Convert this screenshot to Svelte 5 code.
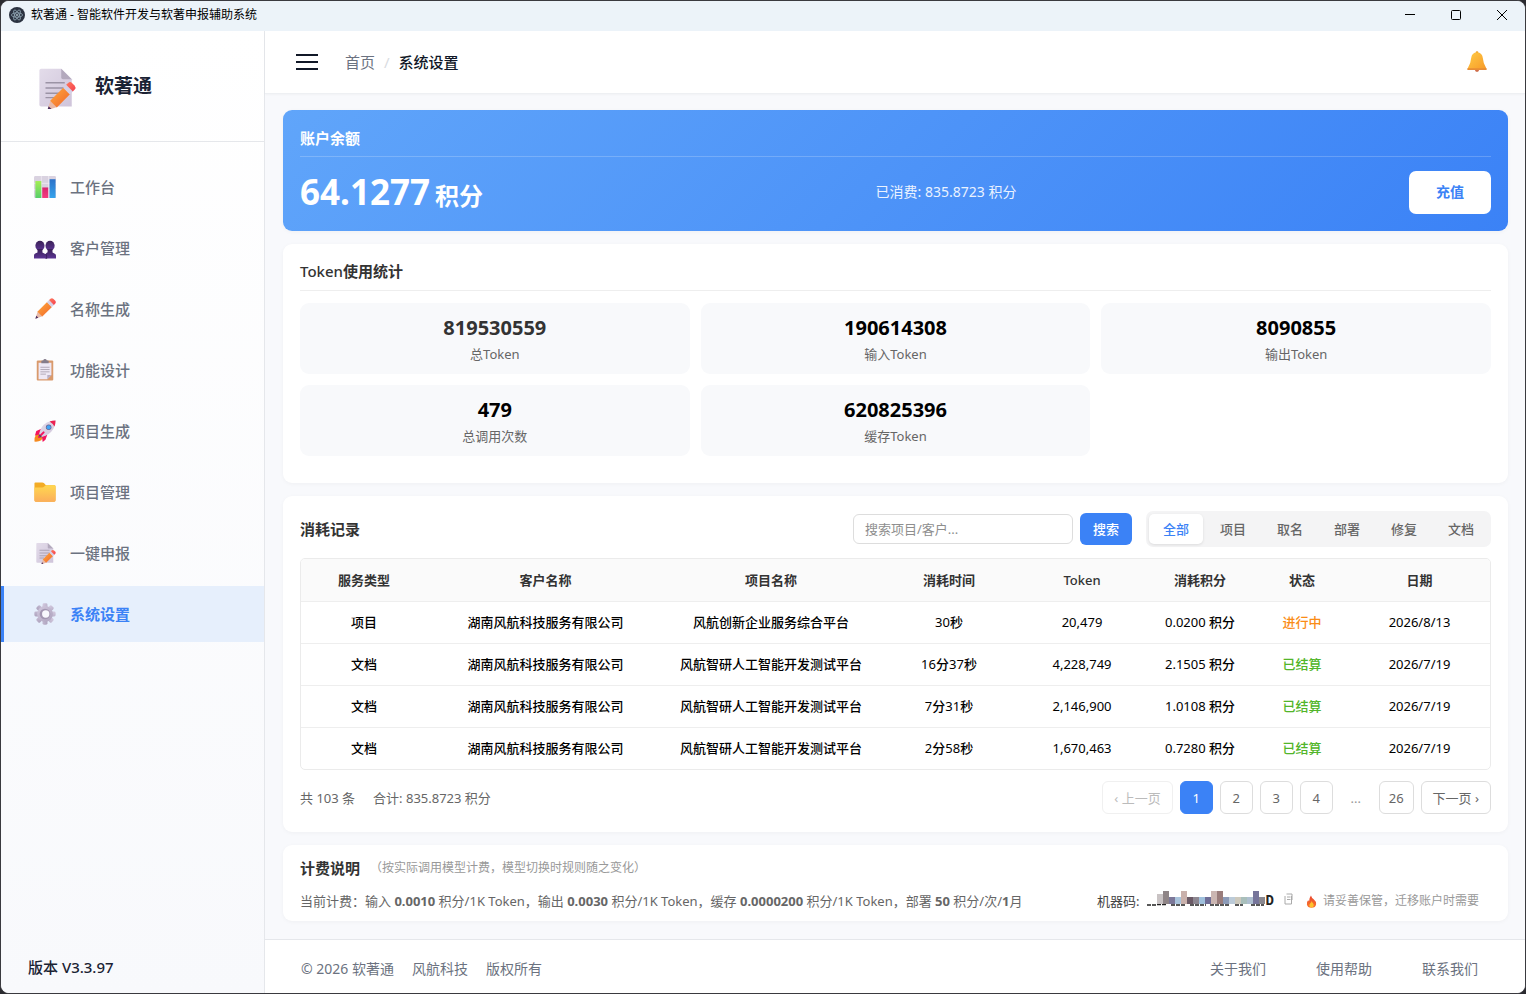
<script>
  const menu = [
    { label: '工作台', icon: 'chart' },
    { label: '客户管理', icon: 'people' },
    { label: '名称生成', icon: 'pencil' },
    { label: '功能设计', icon: 'clipboard' },
    { label: '项目生成', icon: 'rocket' },
    { label: '项目管理', icon: 'folder' },
    { label: '一键申报', icon: 'memo' },
    { label: '系统设置', icon: 'gear' }
  ];
  let current = $state('系统设置');

  const stats = [
    { value: '819530559', label: '总Token', soft: true },
    { value: '190614308', label: '输入Token' },
    { value: '8090855', label: '输出Token' },
    { value: '479', label: '总调用次数' },
    { value: '620825396', label: '缓存Token' }
  ];

  const filters = ['全部', '项目', '取名', '部署', '修复', '文档'];
  let filter = $state('全部');
  let query = $state('');

  const columns = [
    { title: '服务类型', width: 126 },
    { title: '客户名称', width: 237 },
    { title: '项目名称', width: 214 },
    { title: '消耗时间', width: 142 },
    { title: 'Token', width: 124 },
    { title: '消耗积分', width: 112 },
    { title: '状态', width: 92 },
    { title: '日期', width: 143 }
  ];
  const company = '湖南风航科技服务有限公司';
  const rows = [
    { type: '项目', project: '风航创新企业服务综合平台', time: '30秒', token: '20,479', cost: '0.0200', status: '进行中', date: '2026/8/13' },
    { type: '文档', project: '风航智研人工智能开发测试平台', time: '16分37秒', token: '4,228,749', cost: '2.1505', status: '已结算', date: '2026/7/19' },
    { type: '文档', project: '风航智研人工智能开发测试平台', time: '7分31秒', token: '2,146,900', cost: '1.0108', status: '已结算', date: '2026/7/19' },
    { type: '文档', project: '风航智研人工智能开发测试平台', time: '2分58秒', token: '1,670,463', cost: '0.7280', status: '已结算', date: '2026/7/19' }
  ];
  let page = $state(1);

  // digits are set lighter than the units between them
  const timeParts = (t) => t.split(/(\d+)/).filter(Boolean);

  const mosaic = [
    [10, 3, '#c9c3c4'], [16, 0, '#8f8587'], [22, 6, '#7c7899'], [28, 6, '#a9c4dc'], [34, 0, '#c9b1ac'],
    [40, 6, '#6b5a66'], [46, 6, '#8d8791'], [52, 6, '#9fc0dc'], [58, 6, '#6f6d96'], [64, 0, '#cbb6b2'],
    [70, 0, '#9a7d7c'], [76, 6, '#8c9bb8'], [82, 6, '#bccbd8'], [88, 6, '#cdc9bd'], [94, 6, '#a9bfbb'],
    [100, 6, '#aebfd0'], [106, 0, '#76759a'], [112, 6, '#8a8890']
  ];
</script>

{#snippet pencilArt()}
  <path d="M1.500 22.500 4 14.800 9.200 20Z" fill="#e8b9a8" />
  <path d="M1.500 22.500 2.500 19.300 4.700 21.500Z" fill="#4a2c5e" />
  <path d="M3.700 15 14.300 4.400 19.600 9.700 9 20.300Z" fill="url(#g-pencil)" />
  <path d="M14 4.700 16.700 2 22 7.300 19.300 10Z" fill="#d5d0e6" />
  <path d="M16.400 2.300 18 .8Q19.600-.5 21.200 1L23 2.800Q24.500 4.400 23.200 6L21.700 7.600Z" fill="url(#g-eraser)" />
{/snippet}

{#snippet paperArt()}
  <path d="M3.500 1H15l6 6v15.500H3.500Q2.500 22.500 2.500 21.500V2Q2.500 1 3.500 1Z" fill="url(#g-paper)" />
  <path d="M15 1l6 6h-5Q15 7 15 6Z" fill="#b3a9bd" />
  <path d="M6 9h11M6 12h11M6 15h9M6 17.500h5" stroke="#9b93a5" stroke-width=".8" fill="none" />
{/snippet}

{#snippet icon(name)}
  <svg class="icon" viewBox="0 0 24 24" aria-hidden="true">
    {#if name === 'chart'}
      <rect x="0" y="0" width="24" height="24" rx="1.500" fill="#d9d2e0" />
      <path d="M0 8h24M0 15h24M8 0v24M16 0v24" stroke="#f1edf4" stroke-width=".8" />
      <rect x="1.500" y="5.500" width="6.500" height="18.500" fill="url(#g-green)" />
      <rect x="9" y="12.500" width="6.500" height="11.500" fill="url(#g-pink)" />
      <rect x="17" y="3.500" width="6.500" height="20.500" fill="url(#g-blue)" />
    {:else if name === 'people'}
      <g fill="url(#g-purple)" transform="translate(0 2)">
        <ellipse cx="17.500" cy="7.500" rx="5" ry="5.500" />
        <path d="M14.800 11h5.400v4l3 1.500q.8 .6.800 2v3H12v-3q0-2 1.500-3l1.300-.8Z" />
        <ellipse cx="6.500" cy="7.500" rx="5" ry="5.500" />
        <path d="M3.800 11h5.400v4l3 1.500q1.300 .8 1.300 2.500v2.500H0v-3q0-1.700 1.300-2.400l2.500-1.100Z" />
      </g>
      <path d="M12.500 18.500q1.300 1 1.300 3V24" stroke="#2c1646" stroke-width=".7" fill="none" />
    {:else if name === 'pencil'}
      {@render pencilArt()}
    {:else if name === 'clipboard'}
      <rect x="3" y="1.500" width="18" height="22" rx="1.200" fill="#d99a6c" />
      <path d="M5 4h14v13.500L14.500 22H5Z" fill="#eee8f5" />
      <path d="M14.500 22v-4.500H19Z" fill="#b9aec4" />
      <path d="M8 3.500V2.200Q8 1.500 9 1.500h1Q10.500 0 12 0t2 1.500h1q1 0 1 .7V4.500H8Z" fill="#857c8b" />
      <path d="M7 9h10M7 11.500h10M7 14h10M7 16.500h6" stroke="#a69dad" stroke-width=".9" />
    {:else if name === 'rocket'}
      <path d="M2 16.500Q5 14 7.500 16.500T8 22Q4.500 24 .5 23.500 0 19 2 16.500Z" fill="#f58a1f" />
      <path d="M8 9.500 2.500 12 1 17l6-1.500ZM14.500 16 12.500 21.500 9.500 24 8.500 17.500Z" fill="#f4145f" />
      <path d="M5.500 15.500Q7 7 14 2.800 18.500 .6 23.500.5 23.500 5.500 21 9.800 17 16.500 8.500 18.500Z" fill="url(#g-paper)" />
      <path d="M17 1.700Q20 .5 23.500.5q0 3.500-1.200 6.500Q20 3.500 17 1.700Z" fill="#ec2050" />
      <circle cx="16" cy="8" r="3" fill="#6a5f8c" />
      <circle cx="16" cy="8" r="2.300" fill="#42a5f5" />
      <path d="M5.500 18.500 10.500 13.500" stroke="#f4145f" stroke-width="2.200" stroke-linecap="round" />
      <path d="M6 15.500 8.500 18.300 7.600 19.300 5 16.600Z" fill="#51436b" />
    {:else if name === 'folder'}
      <path d="M1.500 1.500H9q1 0 1.800.8L13 4.500h9q1.500 0 1.500 1.500v15q0 1.500-1.500 1.500H2Q.5 22.500.5 21V2.500q0-1 1-1Z" fill="#f3ac25" />
      <path d="M.5 7H9q1.200 0 2-.8l1-1q.6-.7 1.500-.7H22q1.500 0 1.500 1.500v15q0 1.500-1.500 1.500H2Q.5 22.500.5 21Z" fill="url(#g-folder)" />
    {:else if name === 'memo'}
      {@render paperArt()}
      <g transform="translate(7 8.500) scale(.7)">{@render pencilArt()}</g>
    {:else if name === 'gear'}
      <g fill="url(#g-gear)">
        {#each [0, 45, 90, 135] as a}
          <rect x="9.300" y=".4" width="5.400" height="23.200" rx="1.600" transform="rotate({a} 12 12)" />
        {/each}
        <circle cx="12" cy="12" r="8.600" />
      </g>
      <circle cx="12" cy="12" r="5.800" fill="#a397b2" />
      <circle cx="12.800" cy="12" r="4" fill="#f8f8fd" />
    {:else if name === 'bell'}
      <circle cx="12" cy="20.500" r="2.300" fill="#cf6d4a" />
      <circle cx="12" cy="1.800" r="1.500" fill="#f0a024" />
      <path d="M12 1.600q5.800 0 6.400 6.400.5 5.700 3.200 9.800.8 1.500.4 2.200H2q-.4-.7.400-2.200Q5.100 13.700 5.600 8 6.200 1.600 12 1.600Z" fill="url(#g-bell)" />
      <path d="M1.500 18.800h21v2h-21Z" fill="#e88d35" />
    {:else if name === 'fire'}
      <path d="M11 1q1 4 5 7 5 4 4.500 9-.8 6.500-8.500 6.500T3.500 17Q3 12 6 9q.5 2 1.500 2.500Q8 5 11 1Z" fill="url(#g-fire)" />
      <path d="M12.500 11q.5 2.500 2.500 4.500 1.800 2 1 4.500-1 3-4 3t-4-3q-.6-2.500 1.500-4.500 2.500-2 3-4.500Z" fill="#ffc22e" />
    {/if}
  </svg>
{/snippet}

<svg class="defs" aria-hidden="true">
  <defs>
    <linearGradient id="g-pencil" x1="0" y1="0" x2="1" y2="1"><stop stop-color="#ffab3d" /><stop offset="1" stop-color="#f1642b" /></linearGradient>
    <linearGradient id="g-eraser" x1="0" y1="0" x2="1" y2="1"><stop stop-color="#ff7a5c" /><stop offset="1" stop-color="#f43f4f" /></linearGradient>
    <linearGradient id="g-paper" x1="0" y1="0" x2="1" y2="1"><stop stop-color="#e3dcea" /><stop offset="1" stop-color="#cfc4da" /></linearGradient>
    <linearGradient id="g-green" x1="0" y1="0" x2="0" y2="1"><stop stop-color="#a4ee55" /><stop offset="1" stop-color="#57cf6b" /></linearGradient>
    <linearGradient id="g-pink" x1="0" y1="0" x2="0" y2="1"><stop stop-color="#d8256f" /><stop offset="1" stop-color="#f53b80" /></linearGradient>
    <linearGradient id="g-blue" x1="0" y1="0" x2="0" y2="1"><stop stop-color="#2b72c9" /><stop offset="1" stop-color="#35a3ec" /></linearGradient>
    <linearGradient id="g-purple" x1="0" y1="0" x2="0" y2="1"><stop stop-color="#3a2156" /><stop offset="1" stop-color="#5c3494" /></linearGradient>
    <linearGradient id="g-folder" x1="0" y1="0" x2="0" y2="1"><stop stop-color="#ffd84f" /><stop offset="1" stop-color="#fbae5b" /></linearGradient>
    <linearGradient id="g-gear" x1="0" y1="0" x2="1" y2="1"><stop stop-color="#d3cadf" /><stop offset="1" stop-color="#ada2bd" /></linearGradient>
    <linearGradient id="g-bell" x1="0" y1="0" x2="1" y2="1"><stop stop-color="#ffcb45" /><stop offset="1" stop-color="#f79a28" /></linearGradient>
    <linearGradient id="g-fire" x1="0" y1="0" x2="0" y2="1"><stop stop-color="#e8452f" /><stop offset="1" stop-color="#fb7a2b" /></linearGradient>
  </defs>
</svg>

<div class="window">
  <div class="titlebar">
    <svg class="app-mark" viewBox="0 0 16 16" aria-hidden="true">
      <circle cx="8" cy="8" r="8" fill="#2b3240" />
      <g fill="none" stroke="#9fb6c4" stroke-width=".7">
        <ellipse cx="8" cy="8" rx="5.600" ry="2.200" />
        <ellipse cx="8" cy="8" rx="5.600" ry="2.200" transform="rotate(60 8 8)" />
        <ellipse cx="8" cy="8" rx="5.600" ry="2.200" transform="rotate(120 8 8)" />
      </g>
      <circle cx="8" cy="8" r=".9" fill="#b9ccd6" />
    </svg>
    <span class="app-name">软著通 - 智能软件开发与软著申报辅助系统</span>
    <button class="win-btn" aria-label="最小化"><svg viewBox="0 0 12 12"><path d="M1 5.500h10" /></svg></button>
    <button class="win-btn" aria-label="最大化"><svg viewBox="0 0 12 12"><rect x="1.500" y="1.500" width="9" height="9" rx="1" /></svg></button>
    <button class="win-btn" aria-label="关闭"><svg viewBox="0 0 12 12"><path d="M1 1l10 10M11 1L1 11" /></svg></button>
  </div>

  <div class="body">
    <aside class="sidebar">
      <div class="brand">
        <svg class="logo" viewBox="0 0 24 24" aria-hidden="true">
          {@render paperArt()}
          <g transform="translate(6 8.500) scale(.72)">{@render pencilArt()}</g>
        </svg>
        <span>软著通</span>
      </div>
      <nav>
        {#each menu as item}
          <a href="#{item.icon}" class:active={current === item.label} onclick={() => (current = item.label)}>
            {@render icon(item.icon)}
            <span>{item.label}</span>
          </a>
        {/each}
      </nav>
      <div class="version">版本 V3.3.97</div>
    </aside>

    <div class="main">
      <header class="topbar">
        <button class="burger" aria-label="菜单"><i></i><i></i><i></i></button>
        <div class="crumbs">
          <a href="#home">首页</a><span class="slash">/</span><b>系统设置</b>
        </div>
        <button class="bell" aria-label="通知">{@render icon('bell')}</button>
      </header>

      <main class="content">
        <section class="card balance">
          <h2>账户余额</h2>
          <div class="balance-row">
            <div class="amount">64.1277<small>积分</small></div>
            <div class="spent">已消费: 835.8723 积分</div>
            <button class="recharge">充值</button>
          </div>
        </section>

        <section class="card usage">
          <h2><span class="plain">Token</span>使用统计</h2>
          <div class="stats">
            {#each stats as s}
              <div class="stat">
                <div class="value" class:soft={s.soft}>{s.value}</div>
                <div class="label">{s.label}</div>
              </div>
            {/each}
          </div>
        </section>

        <section class="card records">
          <div class="toolbar">
            <h2>消耗记录</h2>
            <div class="tools">
              <input type="text" aria-label="搜索项目/客户" placeholder="搜索项目/客户..." bind:value={query} />
              <button class="search">搜索</button>
              <div class="tabs">
                {#each filters as f}
                  <button class:on={filter === f} onclick={() => (filter = f)}>{f}</button>
                {/each}
              </div>
            </div>
          </div>

          <div class="table-box">
            <table>
              <colgroup>
                {#each columns as c}<col style:width="{c.width}px" />{/each}
              </colgroup>
              <thead>
                <tr>
                  {#each columns as c}<th class:plain={c.title === 'Token'}>{c.title}</th>{/each}
                </tr>
              </thead>
              <tbody>
                {#each rows as r}
                  <tr>
                    <td>{r.type}</td>
                    <td>{company}</td>
                    <td>{r.project}</td>
                    <td>{#each timeParts(r.time) as p}<span class:num={/\d/.test(p)}>{p}</span>{/each}</td>
                    <td class="num">{r.token}</td>
                    <td><span class="num">{r.cost}</span> 积分</td>
                    <td class={r.status === '进行中' ? 'running' : 'done'}>{r.status}</td>
                    <td class="num">{r.date}</td>
                  </tr>
                {/each}
              </tbody>
            </table>
          </div>

          <div class="pager">
            <div class="totals"><span>共 103 条</span><span>合计: 835.8723 积分</span></div>
            <div class="pages">
              <button class="step" disabled={page === 1}>‹ 上一页</button>
              {#each [1, 2, 3, 4] as n}
                <button class:on={page === n} onclick={() => (page = n)}>{n}</button>
              {/each}
              <span class="dots">...</span>
              <button onclick={() => (page = 26)}>26</button>
              <button class="step">下一页 ›</button>
            </div>
          </div>
        </section>

        <section class="card billing">
          <div class="billing-head">
            <h2>计费说明</h2>
            <span>（按实际调用模型计费，模型切换时规则随之变化）</span>
          </div>
          <div class="billing-row">
            <div>当前计费：输入 <b>0.0010</b> 积分/1K Token，输出 <b>0.0030</b> 积分/1K Token，缓存 <b>0.0000200</b> 积分/1K Token，部署 <b>50</b> 积分/次/<b>1</b>月</div>
            <div class="machine">
              <span>机器码:</span>
              <span class="code">
                <svg viewBox="0 0 119 16" aria-hidden="true">
                  <path d="M0 14h9M10 13.500h10M24 14h14M43 14h16M63 14h20M88 14h8M104 14h13" stroke="#222" stroke-width="1.500" stroke-dasharray="4 1" />
                  {#each mosaic as [x, y, color]}
                    <rect {x} {y} width="6" height={13 - y} fill={color} />
                  {/each}
                </svg>
                <b>D</b>
              </span>
              <button class="copy" aria-label="复制">
                <svg viewBox="0 0 10 12"><path d="M2.500 1h5.500v6M1 3v8h6.500V9M3 4h3.500M3 6.500h3.500M7.500 3v6" /></svg>
              </button>
              <span class="flame">{@render icon('fire')}</span>
              <span class="hint">请妥善保管，迁移账户时需要</span>
            </div>
          </div>
        </section>
      </main>

      <footer>
        <div class="legal"><span>© 2026 软著通</span><span>风航科技</span><span>版权所有</span></div>
        <div class="links"><a href="#about">关于我们</a><a href="#help">使用帮助</a><a href="#contact">联系我们</a></div>
      </footer>
    </div>
  </div>
</div>

<style>
  :global(body) {
    margin: 0;
    background: #2b2b30;
    font-family: 'Noto Sans', 'Noto Sans CJK SC', sans-serif;
    font-size: 13px;
    line-height: 20px;
    color: #333;
  }
  :global(*) { box-sizing: border-box; }
  button, input { font: inherit; color: inherit; }
  button { border: 0; padding: 0; background: none; cursor: pointer; }
  a { color: inherit; text-decoration: none; }
  h2 { margin: 0; font-size: 15px; line-height: 20px; font-weight: 700; color: #333; }
  .plain { font-weight: 500; }
  .defs { position: absolute; width: 0; height: 0; }
  .icon { display: block; width: 22px; height: 22px; flex: none; }

  .window {
    display: flex;
    flex-direction: column;
    min-height: 100vh;
    border: 1px solid #3a3a3f;
    border-radius: 9px;
    overflow: hidden;
    background: #f8f9fc;
  }
  .titlebar { display: flex; align-items: center; height: 30px; padding: 0 0 2px 8px; background: #ecf3f9; }
  .app-mark { width: 16px; height: 16px; margin-right: 6px; }
  .app-name { flex: 1; font-size: 12px; color: #000; }
  .win-btn { display: grid; place-items: center; width: 46px; height: 28px; }
  .win-btn svg { width: 12px; height: 12px; fill: none; stroke: #000; stroke-width: 1; }

  .body { flex: 1; display: flex; }
  .sidebar {
    flex: none;
    display: flex;
    flex-direction: column;
    width: 264px;
    border-right: 1px solid #e5e7eb;
    background: linear-gradient(#fff, #f8f9fc);
  }
  .brand {
    display: flex;
    align-items: center;
    gap: 18px;
    height: 111px;
    padding-left: 34px;
    border-bottom: 1px solid #e5e7eb;
    font-size: 19px;
    font-weight: 700;
    color: #1a2233;
  }
  .logo { width: 42px; height: 42px; margin-top: 4px; }
  nav { display: flex; flex-direction: column; gap: 5px; padding-top: 17px; }
  nav a {
    display: flex;
    align-items: center;
    gap: 14px;
    height: 56px;
    padding-left: 30px;
    border-left: 3px solid transparent;
    font-size: 15px;
    font-weight: 500;
    color: #6b7280;
  }
  nav a.active { border-color: #3b82f6; background: #e6effc; color: #3b82f6; font-weight: 700; }
  .version { margin-top: auto; padding: 0 27px 16px; font-size: 15px; font-weight: 500; color: #1a2233; }

  .main { flex: 1; min-width: 0; display: flex; flex-direction: column; }
  .topbar {
    display: flex;
    align-items: center;
    height: 63px;
    padding: 0 37px 0 31px;
    background: #fff;
    border-bottom: 1px solid #eef0f3;
    box-shadow: 0 1px 2px rgba(0, 0, 0, 0.03);
  }
  .burger { display: flex; flex-direction: column; gap: 5px; width: 22px; }
  .burger i { height: 2px; background: #111827; }
  .crumbs { flex: 1; display: flex; gap: 9px; padding-left: 27px; font-size: 15px; color: #6b7280; }
  .crumbs b { font-weight: 500; color: #111827; }
  .slash { color: #d9dce1; }
  .bell { width: 22px; }

  .content { flex: 1; display: flex; flex-direction: column; gap: 13px; padding: 16px 17px 18px 18px; }
  .card { border-radius: 9px; padding: 0 17px; background: #fff; box-shadow: 0 1px 4px rgba(0, 0, 0, 0.04); }

  .balance { padding-bottom: 16px; background: linear-gradient(135deg, #60a5fa, #3b82f6); color: #fff; }
  .balance h2 { padding: 18px 0 8px; border-bottom: 1px solid rgba(255, 255, 255, 0.2); color: #fff; }
  .balance-row { display: flex; align-items: center; justify-content: space-between; height: 58px; padding-top: 12px; }
  .amount { display: flex; align-items: baseline; gap: 5px; font-size: 35px; line-height: 46px; font-weight: 700; }
  .amount small { font-size: 24px; line-height: 28px; }
  .spent { font-size: 14px; color: #eaf2ff; }
  .recharge { width: 82px; height: 43px; border-radius: 7px; background: #fff; color: #3b82f6; font-size: 14px; font-weight: 700; }

  .usage { padding-bottom: 27px; }
  .usage h2 { padding: 17px 0 9px; border-bottom: 1px solid #eee; }
  .stats { display: grid; grid-template-columns: repeat(3, 1fr); gap: 11px; padding-top: 12px; }
  .stat { height: 71px; padding-top: 12px; border-radius: 9px; background: #f8f9fb; text-align: center; }
  .value { font-size: 20px; line-height: 26px; font-weight: 700; color: #000; }
  .value.soft { color: #333; }
  .label { padding-top: 3px; color: #666; }

  .records { padding-bottom: 18px; }
  .toolbar { display: flex; align-items: center; justify-content: space-between; padding: 15px 0 11px; }
  .tools { display: flex; align-items: center; }
  .tools input { width: 220px; height: 30px; margin-right: 7px; padding: 0 11px; border: 1px solid #ddd; border-radius: 6px; background: #fff; outline: none; }
  .tools input::placeholder { color: #8e8e8e; }
  .search { width: 52px; height: 32px; margin-right: 14px; border-radius: 6px; background: #3b82f6; color: #fff; font-weight: 500; }
  .tabs { display: flex; gap: 3px; padding: 3px; border-radius: 7px; background: #f4f4f5; }
  .tabs button { width: 54px; height: 30px; border-radius: 5px; color: #666; font-weight: 500; }
  .tabs button.on { background: #fff; color: #3b82f6; box-shadow: 0 1px 3px rgba(0, 0, 0, 0.1); }

  .table-box { border: 1px solid #ebebeb; border-radius: 5px; overflow: hidden; }
  table { width: 100%; table-layout: fixed; border-collapse: collapse; text-align: center; }
  th, td { height: 42px; padding: 0; border-bottom: 1px solid #eee; }
  th { background: #fafafa; color: #333; font-weight: 700; }
  th.plain { font-weight: 500; }
  td { color: #000; font-weight: 500; white-space: nowrap; }
  tbody tr:last-child td { border-bottom: 0; }
  td.num, .num { font-weight: 400; }
  td.running { color: #fa8c16; }
  td.done { color: #52b52a; }

  .pager { display: flex; align-items: center; justify-content: space-between; padding-top: 11px; color: #666; }
  .totals { display: flex; gap: 18px; }
  .pages { display: flex; align-items: center; gap: 7px; }
  .pages button { min-width: 33px; height: 33px; padding: 0 9px; border: 1px solid #ddd; border-radius: 6px; background: #fff; }
  .pages button.on { border-color: #3b82f6; background: #3b82f6; color: #fff; }
  .pages .step { padding: 0 11px; }
  .pages button:disabled { border-color: #f0f0f0; color: #bbb; }
  .dots { width: 32px; text-align: center; color: #999; }

  .billing { padding: 13px 17px 10px; }
  .billing-head { display: flex; align-items: center; gap: 10px; }
  .billing-head span { font-size: 12px; color: #999; }
  .billing-row { display: flex; justify-content: space-between; padding: 13px 12px 0 0; color: #666; }
  .machine { display: flex; align-items: center; height: 20px; color: #444; }
  .code { display: flex; align-items: center; padding-left: 7px; }
  .code svg { width: 119px; height: 16px; margin-bottom: 4px; }
  .code b { font-family: 'Liberation Mono', monospace; font-size: 14px; color: #222; }
  .copy { width: 10px; height: 12px; margin: 0 11px 4px 10px; }
  .copy svg { display: block; width: 10px; height: 12px; fill: none; stroke: #aaa; stroke-width: 1; }
  .flame .icon { width: 13px; height: 13px; }
  .hint { padding-left: 5px; font-size: 12px; color: #999; }

  footer {
    display: flex;
    align-items: center;
    justify-content: space-between;
    height: 54px;
    padding: 4px 47px 0 36px;
    border-top: 1px solid #e5e7eb;
    background: #fff;
    font-size: 14px;
    color: #6b7280;
  }
  .legal { display: flex; gap: 18px; }
  .links { display: flex; gap: 50px; }
</style>
